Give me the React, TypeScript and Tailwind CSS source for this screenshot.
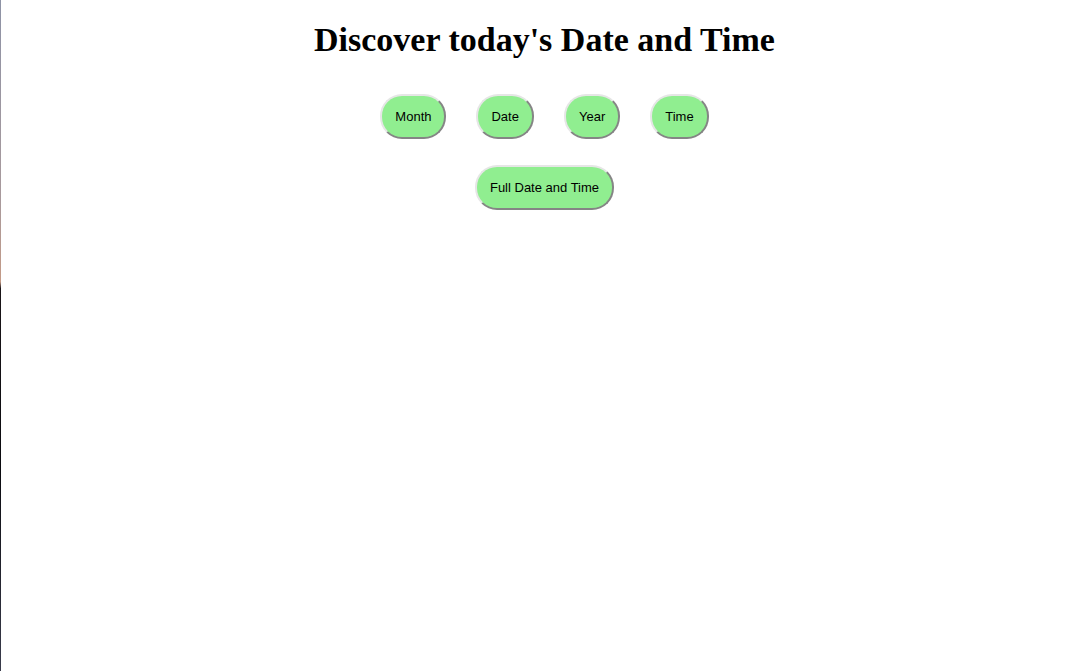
const buttons = ["Month", "Date", "Year", "Time"];

const btn =
  "rounded-[22px] border-2 border-solid border-t-[#e6e6e6] border-l-[#e6e6e6] border-r-[#858585] border-b-[#858585] bg-[#90ee90] px-[13px] py-[13px] text-[13px] leading-[15px] text-black";

export default function App() {
  return (
    <div className="flex h-[671px] w-full bg-white">
      {/* wallpaper sliver at the window edge */}
      <div className="w-px shrink-0 bg-[linear-gradient(to_bottom,#8e93a6_0%,#a99a9c_30%,#c49a86_42%,#1a1518_43%,#0b0b10_70%,#3a3c4c_100%)]" />
      <div className="flex flex-1 flex-col items-center pl-[3px] font-['Liberation_Sans',Arial,sans-serif]">
        <h1 className="mt-[20px] font-['Liberation_Serif','Times_New_Roman',serif] text-[34px] font-bold leading-[40px] text-black">
          Discover today's Date and Time
        </h1>
        <div className="mt-[34px] flex gap-[30px]">
          {buttons.map((b) => (
            <button key={b} className={btn}>
              {b}
            </button>
          ))}
        </div>
        <div className="mt-[26px]">
          <button className={btn}>Full Date and Time</button>
        </div>
      </div>
    </div>
  );
}
